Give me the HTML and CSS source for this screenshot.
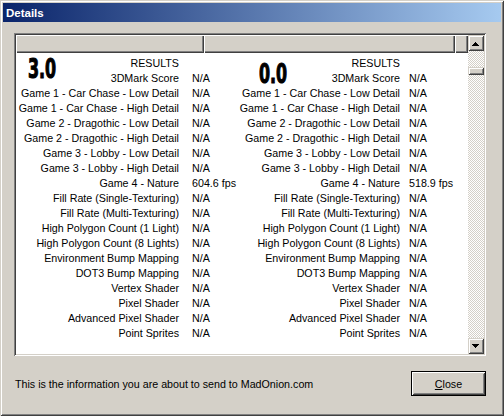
FILE: index.html
```html
<!DOCTYPE html>
<html>
<head>
<meta charset="utf-8">
<link rel="stylesheet" href="styles.css">
</head>
<body>
<div class="window">
  <div class="titlebar"><span class="title">Details</span></div>
  <div class="body">
    <div class="listbox">
      <div class="list-main">
        <div class="header">
          <div class="hcell c1"></div>
          <div class="hcell c2"></div>
          <div class="hcell c3"></div>
        </div>
        <div class="content">
          <div class="panel left">
            <div class="bignum">3.0</div>
            <div class="grid">
              <div class="lbl">RESULTS</div><div class="val"></div>
              <div class="lbl">3DMark Score</div><div class="val">N/A</div>
              <div class="lbl">Game 1 - Car Chase - Low Detail</div><div class="val">N/A</div>
              <div class="lbl">Game 1 - Car Chase - High Detail</div><div class="val">N/A</div>
              <div class="lbl">Game 2 - Dragothic - Low Detail</div><div class="val">N/A</div>
              <div class="lbl">Game 2 - Dragothic - High Detail</div><div class="val">N/A</div>
              <div class="lbl">Game 3 - Lobby - Low Detail</div><div class="val">N/A</div>
              <div class="lbl">Game 3 - Lobby - High Detail</div><div class="val">N/A</div>
              <div class="lbl">Game 4 - Nature</div><div class="val">604.6 fps</div>
              <div class="lbl">Fill Rate (Single-Texturing)</div><div class="val">N/A</div>
              <div class="lbl">Fill Rate (Multi-Texturing)</div><div class="val">N/A</div>
              <div class="lbl">High Polygon Count (1 Light)</div><div class="val">N/A</div>
              <div class="lbl">High Polygon Count (8 Lights)</div><div class="val">N/A</div>
              <div class="lbl">Environment Bump Mapping</div><div class="val">N/A</div>
              <div class="lbl">DOT3 Bump Mapping</div><div class="val">N/A</div>
              <div class="lbl">Vertex Shader</div><div class="val">N/A</div>
              <div class="lbl">Pixel Shader</div><div class="val">N/A</div>
              <div class="lbl">Advanced Pixel Shader</div><div class="val">N/A</div>
              <div class="lbl">Point Sprites</div><div class="val">N/A</div>
            </div>
          </div>
          <div class="panel right">
            <div class="bignum">0.0</div>
            <div class="grid">
              <div class="lbl">RESULTS</div><div class="val"></div>
              <div class="lbl">3DMark Score</div><div class="val">N/A</div>
              <div class="lbl">Game 1 - Car Chase - Low Detail</div><div class="val">N/A</div>
              <div class="lbl">Game 1 - Car Chase - High Detail</div><div class="val">N/A</div>
              <div class="lbl">Game 2 - Dragothic - Low Detail</div><div class="val">N/A</div>
              <div class="lbl">Game 2 - Dragothic - High Detail</div><div class="val">N/A</div>
              <div class="lbl">Game 3 - Lobby - Low Detail</div><div class="val">N/A</div>
              <div class="lbl">Game 3 - Lobby - High Detail</div><div class="val">N/A</div>
              <div class="lbl">Game 4 - Nature</div><div class="val">518.9 fps</div>
              <div class="lbl">Fill Rate (Single-Texturing)</div><div class="val">N/A</div>
              <div class="lbl">Fill Rate (Multi-Texturing)</div><div class="val">N/A</div>
              <div class="lbl">High Polygon Count (1 Light)</div><div class="val">N/A</div>
              <div class="lbl">High Polygon Count (8 Lights)</div><div class="val">N/A</div>
              <div class="lbl">Environment Bump Mapping</div><div class="val">N/A</div>
              <div class="lbl">DOT3 Bump Mapping</div><div class="val">N/A</div>
              <div class="lbl">Vertex Shader</div><div class="val">N/A</div>
              <div class="lbl">Pixel Shader</div><div class="val">N/A</div>
              <div class="lbl">Advanced Pixel Shader</div><div class="val">N/A</div>
              <div class="lbl">Point Sprites</div><div class="val">N/A</div>
            </div>
          </div>
        </div>
      </div>
      <div class="scrollbar">
        <div class="sbtn">
          <svg width="16" height="16" viewBox="0 0 16 16"><rect x="7" y="7" width="1" height="1"/><rect x="6" y="8" width="3" height="1"/><rect x="5" y="9" width="5" height="1"/><rect x="4" y="10" width="7" height="1"/></svg>
        </div>
        <div class="track"><div class="thumb"></div></div>
        <div class="sbtn">
          <svg width="16" height="16" viewBox="0 0 16 16"><rect x="4" y="6" width="7" height="1"/><rect x="5" y="7" width="5" height="1"/><rect x="6" y="8" width="3" height="1"/><rect x="7" y="9" width="1" height="1"/></svg>
        </div>
      </div>
    </div>
    <div class="footer">
      <span class="info">This is the information you are about to send to MadOnion.com</span>
      <button class="close"><u>C</u>lose</button>
    </div>
  </div>
</div>
</body>
</html>
```
FILE: styles.css
```css
html, body {
  margin: 0;
  padding: 0;
  background: #d4d0c8;
}
body {
  font-family: "Liberation Sans", Arial, sans-serif;
  font-size: 10.7px;
  color: #000;
}
.window {
  width: 504px;
  height: 416px;
  box-sizing: border-box;
  padding: 3px;
  background: #d4d0c8;
  box-shadow: inset 1px 1px #d4d0c8, inset -1px -1px #404040, inset 2px 2px #fff, inset -2px -2px #808080;
}
.titlebar {
  height: 19px;
  display: flex;
  align-items: center;
  padding-left: 3px;
  background: linear-gradient(to right, #0a246a, #a6caf0);
}
.title {
  color: #fff;
  font-weight: bold;
  font-size: 11.5px;
}
.body {
  padding: 11px 0 0 11px;
}
.listbox {
  width: 472px;
  height: 323px;
  box-sizing: border-box;
  padding: 2px;
  display: flex;
  background: #fff;
  box-shadow: inset 1px 1px #808080, inset -1px -1px #fff, inset 2px 2px #404040, inset -2px -2px #d4d0c8;
}
.list-main {
  flex: 1;
  display: flex;
  flex-direction: column;
}
.header {
  height: 18px;
  display: flex;
  background: #d4d0c8;
}
.hcell {
  height: 18px;
  box-sizing: border-box;
  background: #d4d0c8;
  box-shadow: inset 1px 1px #fff, inset -1px -1px #404040, inset -2px -2px #808080;
}
.c1 { width: 188px; }
.c2 { width: 251px; }
.c3 { flex: 1; }
.content {
  flex: 1;
  display: flex;
  padding-top: 3px;
  overflow: hidden;
}
.panel {
  position: relative;
}
.panel.left { width: 221px; }
.panel.right { flex: 1; }
.grid {
  display: grid;
  grid-template-columns: 163px auto;
  line-height: 15px;
  white-space: nowrap;
}
.left .grid { column-gap: 13px; }
.right .grid { column-gap: 9px; }
.lbl { text-align: right; }
.bignum {
  position: absolute;
  font-family: "DejaVu Sans Condensed", "DejaVu Sans", sans-serif;
  font-stretch: condensed;
  font-weight: bold;
  font-size: 26px;
  line-height: 20px;
  -webkit-text-stroke: 1px #000;
  transform: scaleX(0.68);
  transform-origin: left top;
}
.left .bignum { left: 12px; top: 3px; }
.right .bignum { left: 22px; top: 8px; }
.scrollbar {
  width: 16px;
  display: flex;
  flex-direction: column;
}
.sbtn, .thumb {
  background: #d4d0c8;
  box-shadow: inset 1px 1px #d4d0c8, inset -1px -1px #404040, inset 2px 2px #fff, inset -2px -2px #808080;
}
.sbtn {
  width: 16px;
  height: 16px;
}
.sbtn svg { display: block; fill: #000; }
.track {
  flex: 1;
  padding-top: 16px;
  background-image: conic-gradient(#d4d0c8 25%, #fff 0 50%, #d4d0c8 0 75%, #fff 0);
  background-size: 2px 2px;
}
.thumb {
  height: 8px;
}
.footer {
  width: 472px;
  margin-top: 15px;
  height: 25px;
  display: flex;
  align-items: center;
  justify-content: space-between;
}
.info { padding-left: 1px; }
.close {
  width: 75px;
  height: 25px;
  margin: 0;
  padding: 0;
  border: 1px solid #000;
  background: #d4d0c8;
  font: inherit;
  color: #000;
  box-shadow: inset 1px 1px #fff, inset -1px -1px #404040, inset 2px 2px #d4d0c8, inset -2px -2px #808080;
}
```
